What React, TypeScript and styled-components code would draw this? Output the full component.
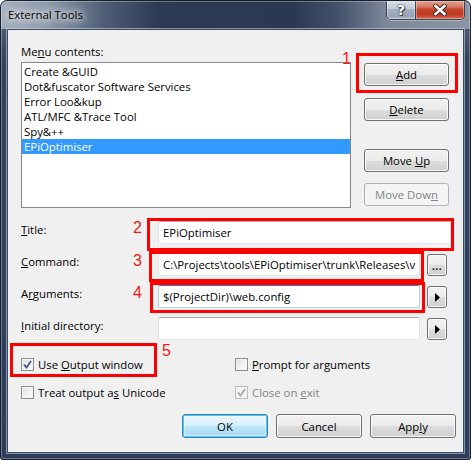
import React from "react";
import styled, { createGlobalStyle } from "styled-components";

const GlobalStyle = createGlobalStyle`
  html, body { margin: 0; padding: 0; background: #ffffff; }
  body {
    font-family: "Open Sans", "Noto Sans", "Liberation Sans", sans-serif;
    font-size: 11.35px;
    color: #000;
  }
  * { box-sizing: border-box; }
`;

const Window = styled.div`
  position: relative;
  width: 471px;
  height: 460px;
  border-radius: 7px 7px 3px 3px;
  overflow: hidden;
  display: flex;
  flex-direction: column;
  background: linear-gradient(to bottom, #5f6d83 0px, #33435e 60px, #2e3e5a 100%);
  &::after {
    content: "";
    position: absolute;
    inset: 0;
    border-radius: 7px 7px 3px 3px;
    border: 1px solid #18202e;
    box-shadow: inset 0 0 0 1px rgba(255, 255, 255, 0.3);
    pointer-events: none;
  }
`;

const TitleBar = styled.div`
  height: 29px;
  flex: none;
  display: flex;
  align-items: flex-start;
  background: linear-gradient(
    to right,
    #a4afbd 0%,
    #8d9aab 10%,
    #4f5e76 22%,
    #2b3952 34%,
    #2a3851 62%,
    #44536b 72%,
    #7c889a 82%,
    #8a95a5 100%
  );
`;

const TitleText = styled.div`
  margin-left: 8px;
  height: 29px;
  line-height: 29px;
  font-size: 11.4px;
  color: #000;
  text-shadow: 0 0 6px #fff, 0 0 10px #fff, 0 0 14px rgba(255, 255, 255, 0.9);
`;

const CaptionGroup = styled.div`
  margin-left: auto;
  margin-right: 6px;
  display: flex;
  height: 20px;
  border: 1px solid #3a4352;
  border-top: none;
  border-radius: 0 0 5px 5px;
  overflow: hidden;
  box-shadow: 0 1px 0 rgba(255, 255, 255, 0.35);
`;

const CaptionButton = styled.div<{ $variant: "help" | "close" }>`
  width: ${(p) => (p.$variant === "close" ? "49px" : "28px")};
  height: 100%;
  display: flex;
  align-items: center;
  justify-content: center;
  border-left: ${(p) => (p.$variant === "close" ? "1px solid #3a4352" : "none")};
  background: ${(p) =>
    p.$variant === "close"
      ? "linear-gradient(to bottom, #e6a696 0%, #d77a63 35%, #c4442c 50%, #c23a22 75%, #d56a50 100%)"
      : "linear-gradient(to bottom, #dde2e8 0%, #c3cbd5 45%, #a7b2c0 50%, #98a4b4 85%, #b2bcc8 100%)"};
  box-shadow: inset 0 0 0 1px rgba(255, 255, 255, 0.35);
  color: #fff;
  font-family: "DejaVu Sans", "Liberation Sans", sans-serif;
  font-weight: bold;
  font-size: 14px;
  text-shadow: 0 0 1px #222, 0 0 2px #333, 1px 1px 0 #444;
`;

const FrameBody = styled.div`
  flex: 1;
  padding: 0 7px 7px 7px;
  display: flex;
`;

const Client = styled.div`
  flex: 1;
  background: #f0f0f0;
  border: 1px solid #3b4a62;
  box-shadow: 0 0 0 1px rgba(210, 220, 232, 0.55);
  padding: 14px 7px 0 13px;
  display: flex;
  flex-direction: column;
`;

const TopSection = styled.div`
  display: flex;
`;

const LeftColumn = styled.div`
  width: 330px;
  display: flex;
  flex-direction: column;
`;

const Label = styled.div`
  height: 15px;
  line-height: 15px;
  white-space: nowrap;
  color: #000;
`;

const ListLabel = styled(Label)`
  margin-bottom: 3px;
`;

const ListBox = styled.div`
  height: 146px;
  background: #fff;
  border: 1px solid #828790;
  padding-top: 1px;
`;

const ListItem = styled.div<{ $selected?: boolean }>`
  height: 15px;
  line-height: 15px;
  padding-left: 2px;
  white-space: nowrap;
  background: ${(p) => (p.$selected ? "#3399ff" : "transparent")};
  color: ${(p) => (p.$selected ? "#fff" : "#000")};
`;

const RightColumn = styled.div`
  margin-left: 13px;
  display: flex;
  flex-direction: column;
`;

const Button = styled.div<{ $w?: number; $h?: number; $gapTop?: number; $disabled?: boolean; $default?: boolean }>`
  width: ${(p) => p.$w ?? 85}px;
  height: ${(p) => p.$h ?? 23}px;
  margin-top: ${(p) => p.$gapTop ?? 0}px;
  display: flex;
  align-items: center;
  justify-content: center;
  border-radius: 3px;
  white-space: nowrap;
  border: 1px solid
    ${(p) => (p.$disabled ? "#adb2b5" : p.$default ? "#3c7fb1" : "#707070")};
  color: ${(p) => (p.$disabled ? "#838383" : "#000")};
  background: ${(p) =>
    p.$disabled
      ? "#f4f4f4"
      : p.$default
      ? "linear-gradient(to bottom, #eaf6fd 0%, #d9f0fc 50%, #bee6fd 51%, #a7d9f5 100%)"
      : "linear-gradient(to bottom, #f2f2f2 0%, #ebebeb 50%, #dddddd 51%, #cfcfcf 100%)"};
  box-shadow: ${(p) =>
    p.$disabled
      ? "none"
      : p.$default
      ? "inset 0 0 0 1px #48c8f6, inset 0 0 0 2px rgba(255,255,255,0.5)"
      : "inset 0 0 0 1px rgba(255,255,255,0.85)"};
`;

const Key = styled.span`
  text-decoration: underline;
  text-underline-offset: 1px;
`;

const FormGrid = styled.div`
  margin-top: 13px;
  display: grid;
  grid-template-columns: 137px auto;
  grid-auto-rows: 23px;
  row-gap: 9px;
`;

const FieldLabel = styled(Label)`
  align-self: start;
  margin-top: 1px;
`;

const FieldRow = styled.div`
  display: flex;
  align-items: center;
  gap: 7px;
`;

const TextBox = styled.div<{ $w: number; $focused?: boolean }>`
  width: ${(p) => p.$w}px;
  height: 23px;
  line-height: 21px;
  padding-left: 4px;
  background: #fff;
  white-space: nowrap;
  overflow: hidden;
  border: 1px solid;
  border-radius: 2px;
  border-color: ${(p) =>
    p.$focused ? "#3d7bad #b5cfe7 #b7d5ea #a4c9e3" : "#abadb3 #e2e3ea #e3e9ef #dbdfe6"};
`;

const SmallButton = styled(Button)`
  width: 20px;
  height: 22px;
  font-size: 10px;
  font-weight: bold;
  letter-spacing: 0.5px;
  padding-top: 2px;
`;

const CheckGrid = styled.div`
  margin-top: 17px;
  display: grid;
  grid-template-columns: 214px auto;
  grid-auto-rows: 15px;
  row-gap: 13px;
`;

const CheckItem = styled.div<{ $disabled?: boolean }>`
  display: flex;
  align-items: center;
  gap: 4px;
  white-space: nowrap;
  color: ${(p) => (p.$disabled ? "#838383" : "#000")};
`;

const CheckBox = styled.div<{ $disabled?: boolean }>`
  width: 13px;
  height: 13px;
  flex: none;
  display: flex;
  align-items: center;
  justify-content: center;
  border: 1px solid ${(p) => (p.$disabled ? "#bcbcbc" : "#8e8f8f")};
  background: ${(p) =>
    p.$disabled ? "#f4f4f4" : "linear-gradient(135deg, #dcdcdc 0%, #f0f0f0 50%, #ffffff 100%)"};
  box-shadow: inset 0 0 0 1px #f4f4f4;
`;

const DialogButtons = styled.div`
  margin-top: 14px;
  display: flex;
  justify-content: flex-end;
  gap: 8px;
`;

const Annotation = styled.div<{ $x: number; $y: number; $w: number; $h: number }>`
  position: absolute;
  left: ${(p) => p.$x}px;
  top: ${(p) => p.$y}px;
  width: ${(p) => p.$w}px;
  height: ${(p) => p.$h}px;
  border: 3px solid #ff0000;
  pointer-events: none;
`;

const AnnotationNumber = styled.div<{ $x: number; $y: number }>`
  position: absolute;
  left: ${(p) => p.$x}px;
  top: ${(p) => p.$y}px;
  font-family: "Liberation Sans", sans-serif;
  font-size: 16px;
  line-height: 16px;
  color: #f01818;
  pointer-events: none;
`;

const Check = ({ color }: { color: string }) => (
  <svg width="9" height="9" viewBox="0 0 9 9">
    <path d="M1 4.5 L3.5 7.5 L8 1" fill="none" stroke={color} strokeWidth="1.8" strokeLinejoin="miter" />
  </svg>
);

const Arrow = () => (
  <svg width="5" height="9" viewBox="0 0 5 9">
    <path d="M0 0 L5 4.5 L0 9 Z" fill="#000" />
  </svg>
);

const CloseGlyph = () => (
  <svg width="14" height="12" viewBox="0 0 14 12">
    <path d="M2.5 2 L11.5 10 M11.5 2 L2.5 10" stroke="#3a2a28" strokeWidth="4.6" strokeLinecap="square" />
    <path d="M2.5 2 L11.5 10 M11.5 2 L2.5 10" stroke="#ffffff" strokeWidth="2.6" strokeLinecap="square" />
  </svg>
);

const items = [
  "Create &GUID",
  "Dot&fuscator Software Services",
  "Error Loo&kup",
  "ATL/MFC &Trace Tool",
  "Spy&++",
  "EPiOptimiser",
];

export default function App() {
  return (
    <>
      <GlobalStyle />
      <Window>
        <TitleBar>
          <TitleText>External Tools</TitleText>
          <CaptionGroup>
            <CaptionButton $variant="help">?</CaptionButton>
            <CaptionButton $variant="close">
              <CloseGlyph />
            </CaptionButton>
          </CaptionGroup>
        </TitleBar>
        <FrameBody>
          <Client>
            <TopSection>
              <LeftColumn>
                <ListLabel>
                  Me<Key>n</Key>u contents:
                </ListLabel>
                <ListBox>
                  {items.map((it, i) => (
                    <ListItem key={it} $selected={i === items.length - 1}>
                      {it}
                    </ListItem>
                  ))}
                </ListBox>
              </LeftColumn>
              <RightColumn>
                <Button $gapTop={19}>
                  <span>
                    <Key>A</Key>dd
                  </span>
                </Button>
                <Button $gapTop={12}>
                  <span>
                    <Key>D</Key>elete
                  </span>
                </Button>
                <Button $gapTop={28}>
                  <span>
                    Move <Key>U</Key>p
                  </span>
                </Button>
                <Button $gapTop={11} $disabled>
                  <span>
                    Move Dow<Key>n</Key>
                  </span>
                </Button>
              </RightColumn>
            </TopSection>

            <FormGrid>
              <FieldLabel>
                <Key>T</Key>itle:
              </FieldLabel>
              <FieldRow>
                <TextBox $w={293}>EPiOptimiser</TextBox>
              </FieldRow>

              <FieldLabel>
                <Key>C</Key>ommand:
              </FieldLabel>
              <FieldRow>
                <TextBox $w={262}>C:\Projects\tools\EPiOptimiser\trunk\Releases\v</TextBox>
                <SmallButton>...</SmallButton>
              </FieldRow>

              <FieldLabel>
                A<Key>r</Key>guments:
              </FieldLabel>
              <FieldRow>
                <TextBox $w={262} $focused>
                  $(ProjectDir)\web.config
                </TextBox>
                <SmallButton>
                  <Arrow />
                </SmallButton>
              </FieldRow>

              <FieldLabel>
                <Key>I</Key>nitial directory:
              </FieldLabel>
              <FieldRow>
                <TextBox $w={262}></TextBox>
                <SmallButton>
                  <Arrow />
                </SmallButton>
              </FieldRow>
            </FormGrid>

            <CheckGrid>
              <CheckItem>
                <CheckBox>
                  <Check color="#3d5496" />
                </CheckBox>
                <span>
                  Use <Key>O</Key>utput window
                </span>
              </CheckItem>
              <CheckItem>
                <CheckBox />
                <span>
                  <Key>P</Key>rompt for arguments
                </span>
              </CheckItem>
              <CheckItem>
                <CheckBox />
                <span>
                  Treat output a<Key>s</Key> Unicode
                </span>
              </CheckItem>
              <CheckItem $disabled>
                <CheckBox $disabled>
                  <Check color="#a8a8a8" />
                </CheckBox>
                <span>
                  Close on <Key>e</Key>xit
                </span>
              </CheckItem>
            </CheckGrid>

            <DialogButtons>
              <Button $w={86} $h={24} $default>
                OK
              </Button>
              <Button $w={86} $h={24}>
                Cancel
              </Button>
              <Button $w={86} $h={24}>
                <span>
                  App<Key>l</Key>y
                </span>
              </Button>
            </DialogButtons>
          </Client>
        </FrameBody>

        <Annotation $x={356} $y={53} $w={102} $h={40} />
        <AnnotationNumber $x={342} $y={51}>1</AnnotationNumber>
        <Annotation $x={147} $y={218} $w={307} $h={33} />
        <AnnotationNumber $x={133} $y={220}>2</AnnotationNumber>
        <Annotation $x={149} $y={251} $w={275} $h={31} />
        <AnnotationNumber $x={133} $y={253}>3</AnnotationNumber>
        <Annotation $x={150} $y={282} $w={275} $h={31} />
        <AnnotationNumber $x={133} $y={285}>4</AnnotationNumber>
        <Annotation $x={10} $y={343} $w={147} $h={34} />
        <AnnotationNumber $x={162} $y={343}>5</AnnotationNumber>
      </Window>
    </>
  );
}
